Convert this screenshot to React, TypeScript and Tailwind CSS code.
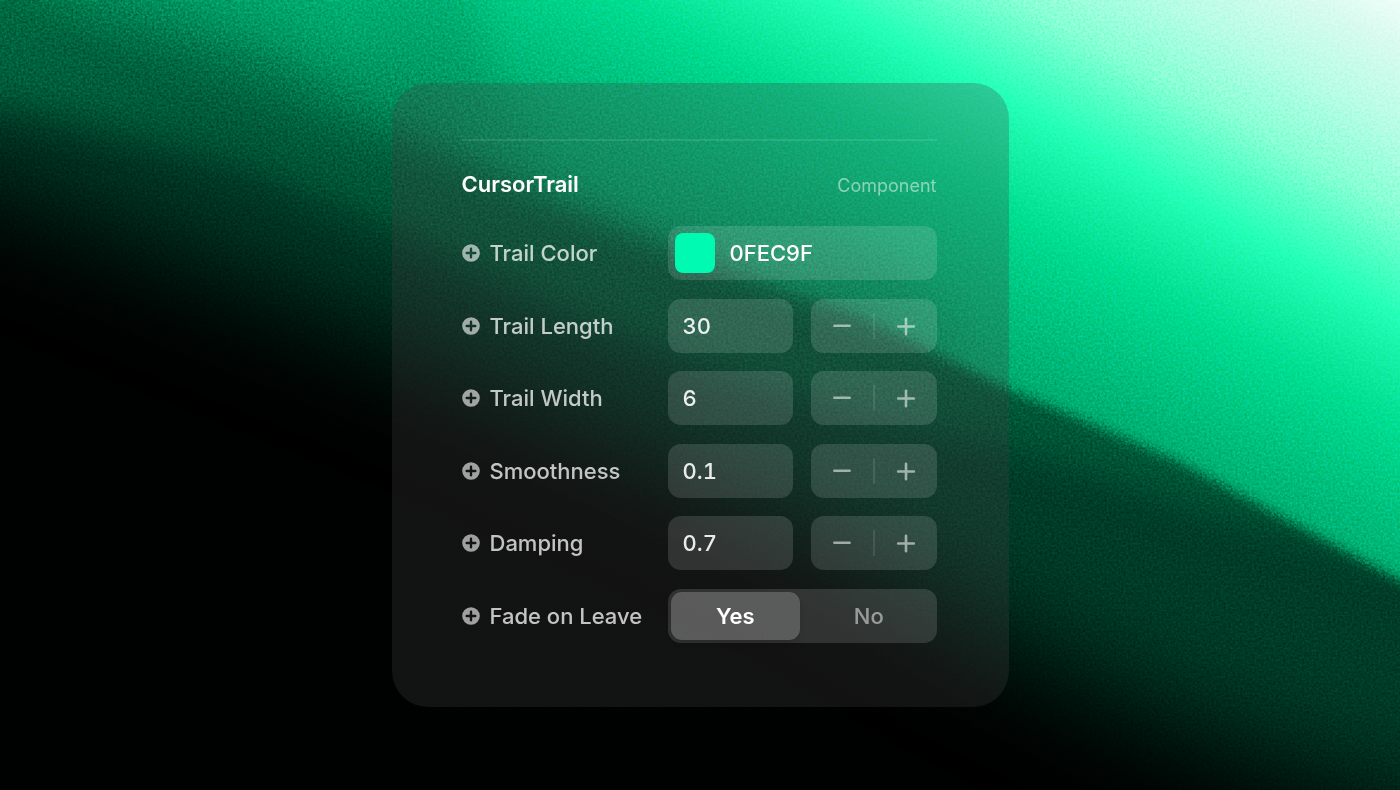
import { useState } from "react";

const EDGE =
  "M-150 -150 L-150 60 L0 70 L200 75 L390 125 L560 200 L700 258 L860 314 L1000 385 L1180 462 L1400 580 L1600 690 L1600 -150 Z";

function Backdrop() {
  return (
    <svg
      className="absolute inset-0 h-full w-full"
      viewBox="0 0 1400 790"
      preserveAspectRatio="xMidYMid slice"
      aria-hidden="true"
    >
      <defs>
        <linearGradient id="light" gradientUnits="userSpaceOnUse" x1="0" y1="0" x2="340" y2="-617">
          <stop offset="0" stopColor="#006a42" />
          <stop offset="0.14" stopColor="#009a63" />
          <stop offset="0.24" stopColor="#00ae70" />
          <stop offset="0.33" stopColor="#00c47e" />
          <stop offset="0.43" stopColor="#00de8f" />
          <stop offset="0.5" stopColor="#12efa2" />
          <stop offset="0.565" stopColor="#22ffb5" />
          <stop offset="0.63" stopColor="#50ffc4" />
          <stop offset="0.7" stopColor="#86ffd5" />
          <stop offset="0.8" stopColor="#b6fde5" />
          <stop offset="0.9" stopColor="#d8fbef" />
          <stop offset="0.97" stopColor="#f2fffb" />
        </linearGradient>
        <linearGradient id="leftFade" gradientUnits="userSpaceOnUse" x1="0" y1="0" x2="1400" y2="0">
          <stop offset="0.25" stopColor="#fff" />
          <stop offset="0.5" stopColor="#000" />
        </linearGradient>
        <linearGradient id="midFade" gradientUnits="userSpaceOnUse" x1="0" y1="0" x2="1400" y2="0">
          <stop offset="0.2" stopColor="#000" />
          <stop offset="0.4" stopColor="#fff" />
          <stop offset="0.55" stopColor="#fff" />
          <stop offset="0.75" stopColor="#000" />
        </linearGradient>
        <linearGradient id="rightFade" gradientUnits="userSpaceOnUse" x1="0" y1="0" x2="1400" y2="0">
          <stop offset="0.45" stopColor="#000" />
          <stop offset="0.7" stopColor="#fff" />
        </linearGradient>
        <filter id="blur60" colorInterpolationFilters="sRGB" filterUnits="userSpaceOnUse" x="-300" y="-300" width="2100" height="1500">
          <feGaussianBlur stdDeviation="60" />
        </filter>
        <filter id="blur40" colorInterpolationFilters="sRGB" filterUnits="userSpaceOnUse" x="-300" y="-300" width="2100" height="1500">
          <feGaussianBlur stdDeviation="40" />
        </filter>
        <filter id="blur18" colorInterpolationFilters="sRGB" filterUnits="userSpaceOnUse" x="-300" y="-300" width="2100" height="1500">
          <feGaussianBlur stdDeviation="18" />
        </filter>
        <filter id="rough" colorInterpolationFilters="sRGB" filterUnits="userSpaceOnUse" x="-300" y="-300" width="2100" height="1500">
          <feGaussianBlur stdDeviation="6" result="soft" />
          <feTurbulence type="fractalNoise" baseFrequency="0.4" numOctaves="2" seed="4" result="noise" />
          <feDisplacementMap in="soft" in2="noise" scale="12" xChannelSelector="R" yChannelSelector="G" />
        </filter>
        <filter id="grain" colorInterpolationFilters="sRGB" filterUnits="userSpaceOnUse" x="0" y="0" width="1400" height="790">
          <feTurbulence type="fractalNoise" baseFrequency="0.42" numOctaves="3" seed="8" />
          <feColorMatrix values="1.3 0 0 0 -0.12  1.3 0 0 0 -0.12  1.3 0 0 0 -0.12  0 0 0 0 1" />
        </filter>
        <mask id="leftMask" maskUnits="userSpaceOnUse" x="0" y="0" width="1400" height="790">
          <rect width="1400" height="790" fill="url(#leftFade)" />
        </mask>
        <mask id="midMask" maskUnits="userSpaceOnUse" x="0" y="0" width="1400" height="790">
          <rect width="1400" height="790" fill="url(#midFade)" />
        </mask>
        <mask id="rightMask" maskUnits="userSpaceOnUse" x="0" y="0" width="1400" height="790">
          <rect width="1400" height="790" fill="url(#rightFade)" />
        </mask>
        <mask id="lightMask" maskUnits="userSpaceOnUse" x="0" y="0" width="1400" height="790">
          <g mask="url(#leftMask)">
            <path d={EDGE} fill="#fff" filter="url(#blur40)" />
          </g>
          <g mask="url(#midMask)">
            <path d={EDGE} fill="#fff" filter="url(#blur18)" />
          </g>
          <g mask="url(#rightMask)">
            <path d={EDGE} fill="#fff" filter="url(#rough)" />
          </g>
          <path
            d="M440 -150 L500 90 L700 200 L860 255 L1000 325 L1180 400 L1400 510 L1600 620 L1600 -150 Z"
            fill="#fff"
            filter="url(#blur18)"
          />
        </mask>
      </defs>
      <rect width="1400" height="790" fill="#000101" />
      <path
        d="M-200 -200 L-200 130 L0 175 L250 275 L450 355 L700 465 L860 545 L1000 630 L1180 720 L1400 805 L1700 900 L1700 -200 Z"
        fill="#003b27"
        filter="url(#blur60)"
      />
      <path
        d="M-100 40 L-100 70 L250 165 L390 225 L560 305 L700 360 L860 412 L1000 442 L1100 474 L1200 506 L1300 536 L1400 572 L1400 500 L1000 340 L600 150 L250 60 Z"
        fill="#005537"
        filter="url(#blur18)"
      />
      <rect width="1400" height="790" fill="url(#light)" mask="url(#lightMask)" />
      <rect
        className="mix-blend-overlay"
        width="1400"
        height="790"
        filter="url(#grain)"
        opacity="0.32"
      />
    </svg>
  );
}

function PlusBadge() {
  return (
    <svg className="size-[18px] shrink-0 text-white/60" viewBox="0 0 18 18" aria-hidden="true">
      <path
        fill="currentColor"
        fillRule="evenodd"
        d="M9 0.2a8.8 8.8 0 1 1 0 17.6A8.8 8.8 0 0 1 9 0.2ZM9 3.5a1.2 1.2 0 0 0-1.2 1.2V7.8H4.7a1.2 1.2 0 0 0 0 2.4H7.8v3.1a1.2 1.2 0 0 0 2.4 0V10.2h3.1a1.2 1.2 0 0 0 0-2.4H10.2V4.7a1.2 1.2 0 0 0-1.2-1.2Z"
      />
    </svg>
  );
}

const FIELD = "h-[54px] rounded-[13px] bg-white/[0.13]";
const ROW = "grid grid-cols-[minmax(0,1fr)_269px] items-center";
const LABEL = "flex items-center gap-[10px] text-[22px] leading-7 font-medium text-white/75";

type StepperProps = { id: string; label: string; initial: string; step: number };

function StepperRow({ id, label, initial, step }: StepperProps) {
  const [value, setValue] = useState(initial);
  const change = (delta: number) =>
    setValue((v) => String(Math.round((Number(v) + delta) * 10) / 10));

  return (
    <div className={ROW}>
      <label htmlFor={id} className={LABEL}>
        <PlusBadge />
        {label}
      </label>
      <div className="grid grid-cols-2 gap-[18px]">
        <div className={FIELD}>
          <input
            id={id}
            value={value}
            onChange={(e) => setValue(e.target.value)}
            className="h-full w-full bg-transparent px-[15px] text-[22px] font-medium text-white/90 tabular-nums outline-none"
          />
        </div>
        <div className={`${FIELD} flex items-center text-white/55`}>
          <button
            type="button"
            aria-label={`Decrease ${label}`}
            onClick={() => change(-step)}
            className="flex h-full flex-1 items-center justify-center"
          >
            <svg className="size-5" viewBox="0 0 20 20" fill="none" stroke="currentColor" strokeWidth="2.6" strokeLinecap="round">
              <path d="M2.4 9.8H17.6" />
            </svg>
          </button>
          <span className="h-[26px] w-[2px] bg-white/10" />
          <button
            type="button"
            aria-label={`Increase ${label}`}
            onClick={() => change(step)}
            className="flex h-full flex-1 items-center justify-center"
          >
            <svg className="size-5" viewBox="0 0 20 20" fill="none" stroke="currentColor" strokeWidth="2.6" strokeLinecap="round">
              <path d="M2.2 10.5H17.8M10 2.7V18.3" />
            </svg>
          </button>
        </div>
      </div>
    </div>
  );
}

export default function App() {
  const [color, setColor] = useState("0FEC9F");
  const [fade, setFade] = useState("Yes");

  return (
    <main className="relative flex min-h-screen items-center justify-center overflow-hidden bg-black font-['Inter',sans-serif]">
      <Backdrop />
      <section className="relative flex min-h-[624px] w-full max-w-[617px] flex-col rounded-[36px] bg-[#404040]/[0.28] pt-14 pr-[72px] pb-16 pl-[70px]">
        <hr className="border-t-2 border-white/10" />
        <header className="flex items-baseline justify-between pt-[29px] pb-[26px] leading-7">
          <h1 className="text-[22px] font-semibold text-white">CursorTrail</h1>
          <span className="text-[18px] text-white/50">Component</span>
        </header>
        <form className="flex flex-1 flex-col justify-between gap-[18px]">
          <div className={ROW}>
            <label htmlFor="trail-color" className={LABEL}>
              <PlusBadge />
              Trail Color
            </label>
            <div className={`${FIELD} flex items-center gap-[15px] px-[7px]`}>
              <button
                type="button"
                aria-label="Pick Trail Color"
                className="size-10 shrink-0 rounded-lg bg-[#00fab2]"
              />
              <input
                id="trail-color"
                value={color}
                onChange={(e) => setColor(e.target.value)}
                className="h-full w-full min-w-0 bg-transparent text-[22px] font-medium text-white outline-none"
              />
            </div>
          </div>
          <StepperRow id="trail-length" label="Trail Length" initial="30" step={1} />
          <StepperRow id="trail-width" label="Trail Width" initial="6" step={1} />
          <StepperRow id="smoothness" label="Smoothness" initial="0.1" step={0.1} />
          <StepperRow id="damping" label="Damping" initial="0.7" step={0.1} />
          <div className={ROW} role="radiogroup" aria-labelledby="fade-label">
            <span id="fade-label" className={LABEL}>
              <PlusBadge />
              Fade on Leave
            </span>
            <div className={`${FIELD} grid grid-cols-2 gap-1 p-[3px]`}>
              {["Yes", "No"].map((option) => (
                <label
                  key={option}
                  className="flex cursor-pointer items-center justify-center rounded-[11px] text-[22px] leading-7 font-medium text-white/50 has-checked:bg-white/20 has-checked:font-semibold has-checked:text-white has-checked:shadow-md"
                >
                  <input
                    type="radio"
                    name="fade"
                    value={option}
                    checked={fade === option}
                    onChange={() => setFade(option)}
                    className="sr-only"
                  />
                  {option}
                </label>
              ))}
            </div>
          </div>
        </form>
      </section>
    </main>
  );
}
